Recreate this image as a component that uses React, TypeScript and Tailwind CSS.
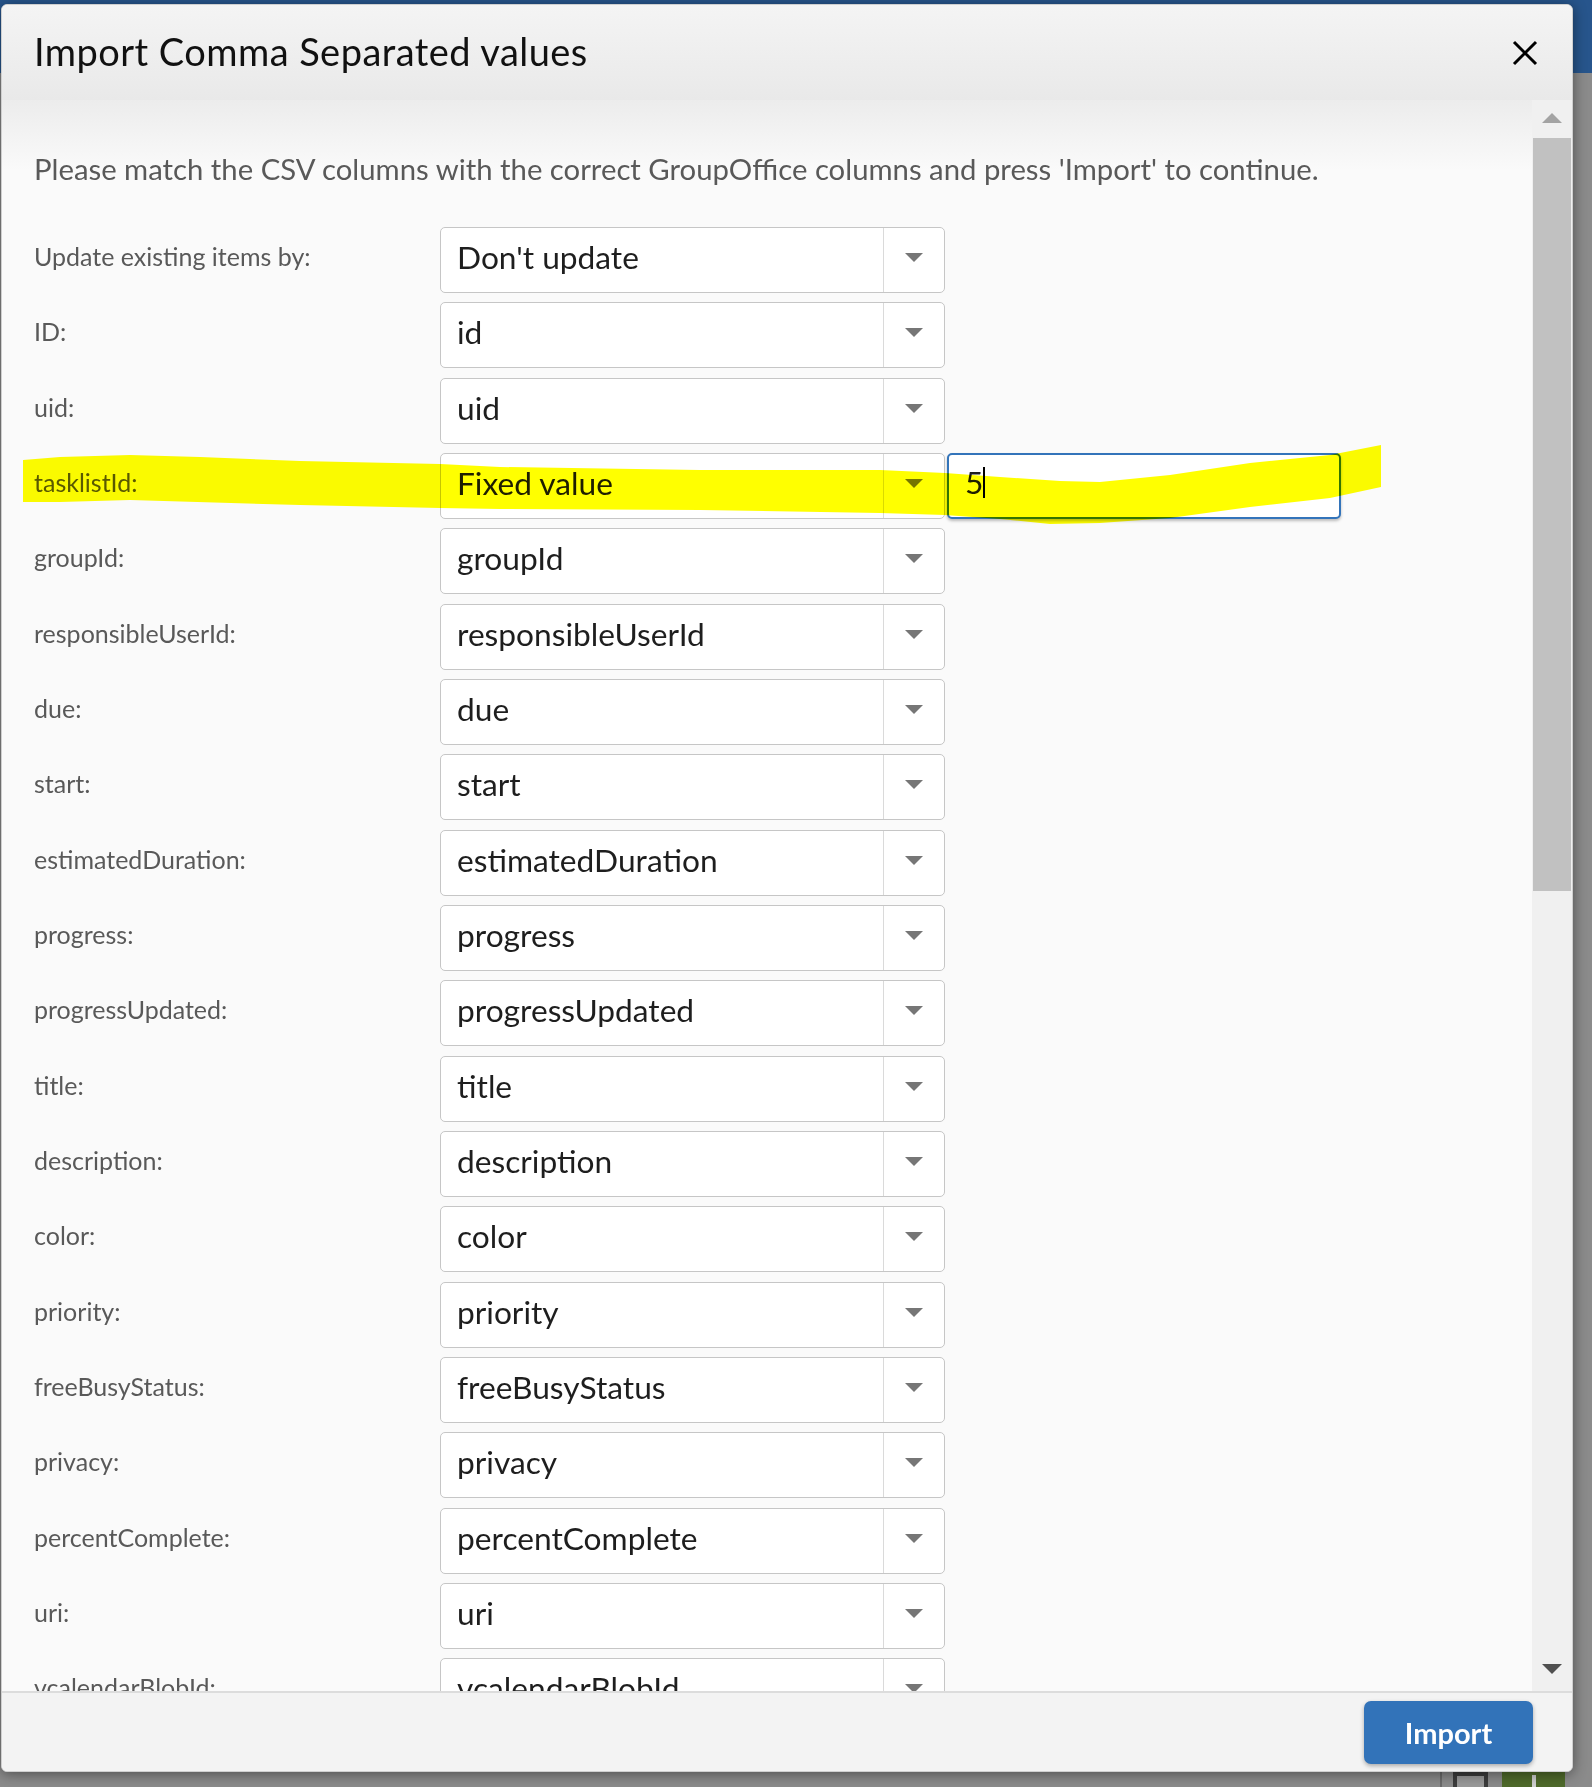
import React from 'react';

interface MappingRow {
  label: string;
  value: string;
}

const rows: MappingRow[] = [
  { label: 'Update existing items by:', value: "Don't update" },
  { label: 'ID:', value: 'id' },
  { label: 'uid:', value: 'uid' },
  { label: 'tasklistId:', value: 'Fixed value' },
  { label: 'groupId:', value: 'groupId' },
  { label: 'responsibleUserId:', value: 'responsibleUserId' },
  { label: 'due:', value: 'due' },
  { label: 'start:', value: 'start' },
  { label: 'estimatedDuration:', value: 'estimatedDuration' },
  { label: 'progress:', value: 'progress' },
  { label: 'progressUpdated:', value: 'progressUpdated' },
  { label: 'title:', value: 'title' },
  { label: 'description:', value: 'description' },
  { label: 'color:', value: 'color' },
  { label: 'priority:', value: 'priority' },
  { label: 'freeBusyStatus:', value: 'freeBusyStatus' },
  { label: 'privacy:', value: 'privacy' },
  { label: 'percentComplete:', value: 'percentComplete' },
  { label: 'uri:', value: 'uri' },
  { label: 'vcalendarBlobId:', value: 'vcalendarBlobId' },
];

const ComboBox: React.FC<{ value: string }> = ({ value }) => (
  <div className="flex h-[66px] w-[505px] shrink-0 rounded-[5px] border border-[#c6c6c6] bg-white">
    <div className="flex-1 pl-[16px] pt-[10px] text-[31.7px] leading-[38px] text-[#1e1e1e]">{value}</div>
    <div className="flex w-[61px] items-center justify-center border-l border-[#dadada] pb-[5px]">
      <svg width="18" height="9" viewBox="0 0 18 9">
        <path d="M0 0h18L9 9z" fill="#767676" />
      </svg>
    </div>
  </div>
);

export default function App() {
  return (
    <div className="relative h-[1787px] w-[1592px] overflow-hidden bg-[#8b8b8b] font-['Lato','Liberation_Sans',sans-serif]">
      {/* page behind the modal mask */}
      <div className="h-[73px] w-full bg-[#27558c]" />
      <div className="flex h-[14px] w-full">
        <div className="ml-[1190px] h-full w-px bg-[#6e6e6e]" />
        <div className="ml-[33px] h-full w-px bg-[#6e6e6e]" />
      </div>
      <div className="absolute bottom-0 left-0 flex h-[15px] w-full">
        <div className="ml-[1440px] h-full w-[2px] bg-[#6a6a6a]" />
        <div className="ml-[11px] h-full w-[35px] bg-[#3c3c3c] px-[4px] pt-[4px]">
          <div className="h-full bg-[#9a9a9a]" />
        </div>
        <div className="ml-[14px] flex h-full w-[63px] justify-center bg-[#4f6a2b] pt-[3px]">
          <div className="h-full w-[4px] bg-[#cfcfcf]" />
        </div>
      </div>

      {/* dialog */}
      <div className="absolute left-[1px] top-[4px] flex h-[1768px] w-[1572px] flex-col overflow-hidden rounded-[6px] border border-[#cfcfcf] bg-[#fafafa] shadow-[0_2px_14px_rgba(0,0,0,0.45)]">
        <div className="flex h-[95px] shrink-0 items-center justify-between bg-[linear-gradient(to_bottom,#f4f4f4,#e9e9e9)] pl-[32px] pr-[34px]">
          <h1 className="pb-[2px] text-[38px] font-normal tracking-[0.45px] text-[#111]">Import Comma Separated values</h1>
          <svg width="26" height="26" viewBox="0 0 26 26">
            <path d="M2 2L24 24M24 2L2 24" stroke="#000" strokeWidth="3" />
          </svg>
        </div>

        <div className="flex min-h-0 flex-1">
          <div className="min-w-0 flex-1 overflow-hidden bg-[linear-gradient(to_bottom,#ececec_0px,#fafafa_70px)] pl-[32px]">
            <p className="pt-[52px] text-[29.3px] leading-[34px] text-[#595959]">
              Please match the CSV columns with the correct GroupOffice columns and press 'Import' to continue.
            </p>
            <div className="mt-[41px] flex flex-col gap-[9.33px]">
              {rows.map((row) => (
                <div key={row.label} className="flex h-[66px] shrink-0">
                  <div className="w-[406px] shrink-0 pt-[14px] text-[25px] leading-[30px] text-[#595959]">{row.label}</div>
                  <ComboBox value={row.value} />
                  {row.value === 'Fixed value' && (
                    <div className="ml-[2px] flex h-[66px] w-[394px] rounded-[5px] border-2 border-[#3374ba] bg-white pl-[16px] pt-[8px] shadow-[0_2px_3px_rgba(0,0,0,0.25)]">
                      <span className="text-[31.7px] leading-[38px] text-[#1e1e1e]">5</span>
                      <span className="mt-[4px] h-[31px] w-[1.5px] bg-black" />
                    </div>
                  )}
                </div>
              ))}
            </div>
          </div>

          {/* scrollbar */}
          <div className="flex w-[40px] shrink-0 flex-col items-center bg-[#f0f0f0]">
            <svg className="mt-[13px]" width="20" height="10" viewBox="0 0 20 10">
              <path d="M0 10h20L10 0z" fill="#a3a3a3" />
            </svg>
            <div className="mt-[15px] h-[753px] w-[38px] bg-[#c1c1c1]" />
            <div className="flex-1" />
            <svg className="mb-[17px]" width="20" height="10" viewBox="0 0 20 10">
              <path d="M0 0h20L10 10z" fill="#505050" />
            </svg>
          </div>
        </div>

        <div className="flex h-[80px] shrink-0 items-start justify-end border-t-2 border-[#dcdcdc] bg-[#f3f3f3] pr-[39px] pt-[8px]">
          <button className="h-[63px] w-[169px] rounded-[7px] bg-[#3273b9] text-[29px] font-bold text-white shadow-[0_2px_4px_rgba(0,0,0,0.3)]">
            Import
          </button>
        </div>
      </div>

      {/* yellow marker stroke drawn over the screenshot */}
      <svg className="pointer-events-none absolute left-0 top-0 mix-blend-multiply" width="1592" height="1787" viewBox="0 0 1592 1787">
        <path
          d="M23 460 L60 457 L130 455 L200 457 L300 461 L440 464 L500 467 L700 470 L880 470 L945 473 L1000 477 L1060 481 L1100 482 L1170 475 L1250 463 L1330 455 L1381 445 L1381 487 L1330 498 L1250 507 L1170 518 L1100 523 L1050 524 L1000 519 L945 515 L880 513 L700 510 L500 509 L440 508 L300 505 L130 500 L60 502 L23 502 Z"
          fill="#ffff00"
        />
      </svg>
    </div>
  );
}
